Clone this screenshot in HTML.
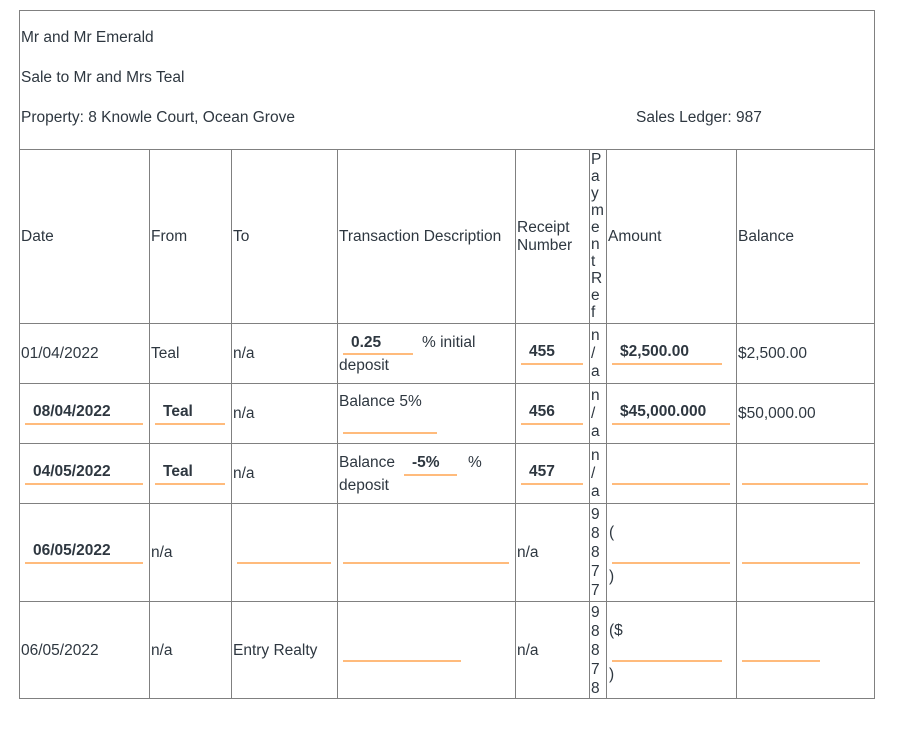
<!DOCTYPE html>
<html><head><meta charset="utf-8"><style>
body{margin:0;width:924px;height:745px;background:#fff;position:relative;overflow:hidden;font-family:"Liberation Sans",sans-serif;font-size:15.5px;color:#2e3740}
.h,.v{position:absolute;background:#808080}
.h{height:1px}.v{width:1px}
.t{position:absolute;line-height:18px;white-space:nowrap;margin-top:1px}
.b{font-weight:bold}
.u{position:absolute;height:2px;background:#ffbb7c}
</style></head><body>
<div class="h" style="left:19px;top:10px;width:856px"></div>
<div class="h" style="left:19px;top:149px;width:856px"></div>
<div class="h" style="left:19px;top:323px;width:856px"></div>
<div class="h" style="left:19px;top:383px;width:856px"></div>
<div class="h" style="left:19px;top:443px;width:856px"></div>
<div class="h" style="left:19px;top:503px;width:856px"></div>
<div class="h" style="left:19px;top:601px;width:856px"></div>
<div class="h" style="left:19px;top:698px;width:856px"></div>
<div class="v" style="left:19px;top:10px;height:689px"></div>
<div class="v" style="left:874px;top:10px;height:689px"></div>
<div class="v" style="left:149px;top:149px;height:550px"></div>
<div class="v" style="left:231px;top:149px;height:550px"></div>
<div class="v" style="left:337px;top:149px;height:550px"></div>
<div class="v" style="left:515px;top:149px;height:550px"></div>
<div class="v" style="left:589px;top:149px;height:550px"></div>
<div class="v" style="left:606px;top:149px;height:550px"></div>
<div class="v" style="left:736px;top:149px;height:550px"></div>

<div class="t" style="left:21px;top:28px">Mr and Mr Emerald</div>
<div class="t" style="left:21px;top:68px">Sale to Mr and Mrs Teal</div>
<div class="t" style="left:21px;top:108px">Property: 8 Knowle Court, Ocean Grove</div>
<div class="t" style="left:636px;top:108px">Sales Ledger: 987</div>

<div class="t" style="left:21px;top:227px">Date</div>
<div class="t" style="left:151px;top:227px">From</div>
<div class="t" style="left:233px;top:227px">To</div>
<div class="t" style="left:339px;top:227px">Transaction Description</div>
<div class="t" style="left:517px;top:218px">Receipt</div>
<div class="t" style="left:517px;top:236px">Number</div>
<div class="t" style="left:591px;top:150px;line-height:17px;white-space:normal;width:14px">P<br>a<br>y<br>m<br>e<br>n<br>t<br>R<br>e<br>f</div>
<div class="t" style="left:608px;top:227px">Amount</div>
<div class="t" style="left:738px;top:227px">Balance</div>

<div class="t" style="left:21px;top:344px">01/04/2022</div>
<div class="t" style="left:151px;top:344px">Teal</div>
<div class="t" style="left:233px;top:344px">n/a</div>
<div class="t b" style="left:351px;top:333px">0.25</div>
<div class="u" style="left:343px;top:353px;width:70px"></div>
<div class="t" style="left:422px;top:333px">% initial</div>
<div class="t" style="left:339px;top:356px">deposit</div>
<div class="t b" style="left:529px;top:342px">455</div>
<div class="u" style="left:521px;top:363px;width:62px"></div>
<div class="t" style="left:591px;top:326px;line-height:18px">n<br>/<br>a</div>
<div class="t b" style="left:620px;top:342px">$2,500.00</div>
<div class="u" style="left:612px;top:363px;width:110px"></div>
<div class="t" style="left:738px;top:344px">$2,500.00</div>

<div class="t b" style="left:33px;top:402px">08/04/2022</div>
<div class="u" style="left:25px;top:423px;width:118px"></div>
<div class="t b" style="left:163px;top:402px">Teal</div>
<div class="u" style="left:155px;top:423px;width:70px"></div>
<div class="t" style="left:233px;top:404px">n/a</div>
<div class="t" style="left:339px;top:392px">Balance 5%</div>
<div class="u" style="left:343px;top:432px;width:94px"></div>
<div class="t b" style="left:529px;top:402px">456</div>
<div class="u" style="left:521px;top:423px;width:62px"></div>
<div class="t" style="left:591px;top:386px">n<br>/<br>a</div>
<div class="t b" style="left:620px;top:402px">$45,000.000</div>
<div class="u" style="left:612px;top:423px;width:118px"></div>
<div class="t" style="left:738px;top:404px">$50,000.00</div>

<div class="t b" style="left:33px;top:462px">04/05/2022</div>
<div class="u" style="left:25px;top:483px;width:118px"></div>
<div class="t b" style="left:163px;top:462px">Teal</div>
<div class="u" style="left:155px;top:483px;width:70px"></div>
<div class="t" style="left:233px;top:464px">n/a</div>
<div class="t" style="left:339px;top:453px">Balance</div>
<div class="t b" style="left:412px;top:453px">-5%</div>
<div class="u" style="left:404px;top:474px;width:53px"></div>
<div class="t" style="left:468px;top:453px">%</div>
<div class="t" style="left:339px;top:476px">deposit</div>
<div class="t b" style="left:529px;top:462px">457</div>
<div class="u" style="left:521px;top:483px;width:62px"></div>
<div class="t" style="left:591px;top:446px">n<br>/<br>a</div>
<div class="u" style="left:612px;top:483px;width:118px"></div>
<div class="u" style="left:742px;top:483px;width:126px"></div>

<div class="t b" style="left:33px;top:541px">06/05/2022</div>
<div class="u" style="left:25px;top:562px;width:118px"></div>
<div class="t" style="left:151px;top:543px">n/a</div>
<div class="u" style="left:237px;top:562px;width:94px"></div>
<div class="u" style="left:343px;top:562px;width:166px"></div>
<div class="t" style="left:517px;top:543px">n/a</div>
<div class="t" style="left:591px;top:504px;line-height:19px">9<br>8<br>8<br>7<br>7</div>
<div class="t" style="left:609px;top:523px">(</div>
<div class="t" style="left:609px;top:567px">)</div>
<div class="u" style="left:612px;top:562px;width:118px"></div>
<div class="u" style="left:742px;top:562px;width:118px"></div>

<div class="t" style="left:21px;top:641px">06/05/2022</div>
<div class="t" style="left:151px;top:641px">n/a</div>
<div class="t" style="left:233px;top:641px">Entry Realty</div>
<div class="u" style="left:343px;top:660px;width:118px"></div>
<div class="t" style="left:517px;top:641px">n/a</div>
<div class="t" style="left:591px;top:602px;line-height:19px">9<br>8<br>8<br>7<br>8</div>
<div class="t" style="left:609px;top:621px">($</div>
<div class="t" style="left:609px;top:665px">)</div>
<div class="u" style="left:612px;top:660px;width:110px"></div>
<div class="u" style="left:742px;top:660px;width:78px"></div>
</body></html>
